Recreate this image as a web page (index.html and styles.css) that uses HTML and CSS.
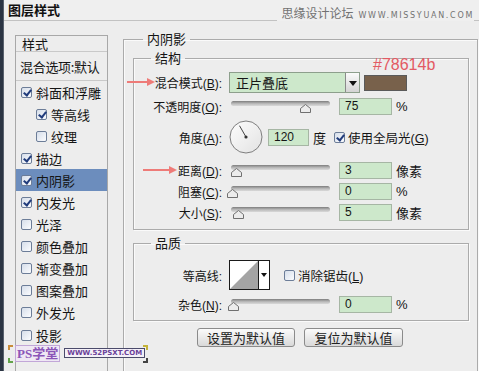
FILE: index.html
```html
<!DOCTYPE html>
<html lang="zh-CN">
<head>
  <meta charset="UTF-8" />
  <title>图层样式</title>
  <link rel="stylesheet" href="styles.css">
</head>
<body>
  <div class="strip"></div>

  <div class="dialog">
    <!-- title -->
    <header class="titlebar">
      <h1>图层样式</h1>
      <div class="site-mark"><span class="cn">思缘设计论坛</span><span class="url">WWW.MISSYUAN.COM</span></div>
    </header>

    <div class="dialog-body">
      <!-- left list -->
      <aside class="styles-list">
        <div class="list-head">样式</div>
        <div class="list-blend">混合选项:默认</div>
        <div class="item"><span class="cb on"></span>斜面和浮雕</div>
        <div class="item sub"><span class="cb on"></span>等高线</div>
        <div class="item sub"><span class="cb"></span>纹理</div>
        <div class="item"><span class="cb on"></span>描边</div>
        <div class="item active"><span class="cb on"></span>内阴影</div>
        <div class="item"><span class="cb on"></span>内发光</div>
        <div class="item"><span class="cb"></span>光泽</div>
        <div class="item"><span class="cb"></span>颜色叠加</div>
        <div class="item"><span class="cb"></span>渐变叠加</div>
        <div class="item"><span class="cb"></span>图案叠加</div>
        <div class="item"><span class="cb"></span>外发光</div>
        <div class="item"><span class="cb"></span>投影</div>
      </aside>

      <!-- right panel -->
      <fieldset class="group outer">
        <legend>内阴影</legend>

        <fieldset class="group struct">
          <legend>结构</legend>

          <div class="row r-mode">
            <svg class="arrow a1" width="28" height="8" viewBox="0 0 28 8"><line x1="0" y1="4" x2="21" y2="4" stroke="#ee7b78" stroke-width="2"/><polygon points="20,0 28,4 20,8" fill="#ee7b78"/></svg>
            <span class="lbl">混合模式(<u>B</u>):</span>
            <div class="select"><span>正片叠底</span><i class="drop"></i></div>
            <div class="swatch"><span class="hex">#78614b</span></div>
          </div>

          <div class="row r-opacity">
            <span class="lbl">不透明度(<u>O</u>):</span>
            <div class="slider"><div class="track"></div><svg class="thumb" style="left:69px" width="11" height="9" viewBox="0 0 11 9"><polygon points="0.5,8.5 0.5,4.5 5.5,0.5 10.5,4.5 10.5,8.5" fill="#ececec" stroke="#707070"/></svg></div>
            <div class="field">75</div>
            <span class="unit">%</span>
          </div>

          <div class="row r-angle">
            <span class="lbl">角度(<u>A</u>):</span>
            <svg class="dial" width="34" height="34" viewBox="0 0 34 34">
              <defs><linearGradient id="dg" x1="0" y1="0" x2="1" y2="1"><stop offset="0" stop-color="#fdfdfd"/><stop offset="1" stop-color="#e2e2e2"/></linearGradient></defs>
              <circle cx="17" cy="17" r="16" fill="url(#dg)" stroke="#7e7e7e"/>
              <line x1="17" y1="17" x2="10.5" y2="5.7" stroke="#444" stroke-width="1"/>
              <circle cx="17" cy="17" r="1.6" fill="#333"/>
            </svg>
            <div class="field narrow">120</div>
            <span class="unit">度</span>
            <span class="cb on global"></span><span class="cb-text">使用全局光(<u>G</u>)</span>
          </div>

          <div class="row r-dist">
            <svg class="arrow a2" width="34" height="8" viewBox="0 0 34 8"><line x1="0" y1="4" x2="27" y2="4" stroke="#ee7b78" stroke-width="2"/><polygon points="26,0 34,4 26,8" fill="#ee7b78"/></svg>
            <span class="lbl">距离(<u>D</u>):</span>
            <div class="slider"><div class="track"></div><svg class="thumb" style="left:0px" width="11" height="9" viewBox="0 0 11 9"><polygon points="0.5,8.5 0.5,4.5 5.5,0.5 10.5,4.5 10.5,8.5" fill="#ececec" stroke="#707070"/></svg></div>
            <div class="field">3</div>
            <span class="unit">像素</span>
          </div>

          <div class="row r-choke">
            <span class="lbl">阻塞(<u>C</u>):</span>
            <div class="slider"><div class="track"></div><svg class="thumb" style="left:-4px" width="11" height="9" viewBox="0 0 11 9"><polygon points="0.5,8.5 0.5,4.5 5.5,0.5 10.5,4.5 10.5,8.5" fill="#ececec" stroke="#707070"/></svg></div>
            <div class="field">0</div>
            <span class="unit">%</span>
          </div>

          <div class="row r-size">
            <span class="lbl">大小(<u>S</u>):</span>
            <div class="slider"><div class="track"></div><svg class="thumb" style="left:2px" width="11" height="9" viewBox="0 0 11 9"><polygon points="0.5,8.5 0.5,4.5 5.5,0.5 10.5,4.5 10.5,8.5" fill="#ececec" stroke="#707070"/></svg></div>
            <div class="field">5</div>
            <span class="unit">像素</span>
          </div>
        </fieldset>

        <fieldset class="group quality">
          <legend>品质</legend>

          <div class="row r-contour">
            <span class="lbl">等高线:</span>
            <div class="contour">
              <svg width="28" height="28" viewBox="0 0 28 28"><rect width="28" height="28" fill="#fff"/><polygon points="0,28 28,0 28,28" fill="#a4a4a4"/></svg>
              <i class="drop"></i>
            </div>
            <span class="cb aa"></span><span class="cb-text">消除锯齿(<u>L</u>)</span>
          </div>

          <div class="row r-noise">
            <span class="lbl">杂色(<u>N</u>):</span>
            <div class="slider"><div class="track"></div><svg class="thumb" style="left:-3px" width="11" height="9" viewBox="0 0 11 9"><polygon points="0.5,8.5 0.5,4.5 5.5,0.5 10.5,4.5 10.5,8.5" fill="#ececec" stroke="#707070"/></svg></div>
            <div class="field">0</div>
            <span class="unit">%</span>
          </div>
        </fieldset>

        <div class="buttons">
          <button>设置为默认值</button>
          <button>复位为默认值</button>
        </div>
      </fieldset>
    </div>

    <!-- watermark -->
    <div class="ps-mark">
      <i class="corner tl"></i><i class="corner bl"></i><i class="corner tr"></i><i class="corner br"></i>
      <span class="ps">PS学堂</span><span class="ps-url">WWW.52PSXT.COM</span>
    </div>
  </div>
</body>
</html>
```

FILE: styles.css
```css
* { box-sizing: border-box; }
body {
  margin: 0;
  width: 479px;
  height: 371px;
  overflow: hidden;
  display: flex;
  background: #ededed;
  font-family: "Noto Sans CJK SC", sans-serif;
  font-size: 13px;
  color: #151515;
}
.strip {
  width: 4px;
  flex-shrink: 0;
  background: #2b3443;
  border-right: 1px solid #59616d;
}
.dialog {
  flex: 1;
  position: relative;
  height: 371px;
  overflow: hidden;
}

/* title */
.titlebar {
  height: 21px;
  border-bottom: 1px solid #c2c2c2;
  display: flex;
  align-items: center;
  padding-left: 4px;
  background: #efefef;
}
.titlebar h1 {
  margin: 0;
  font-size: 13px;
  font-weight: bold;
  line-height: 20px;
  color: #111;
}
.site-mark {
  position: absolute;
  right: 5px;
  top: 5px;
  display: flex;
  align-items: flex-end;
  background: #efefef;
  padding-left: 4px;
  color: #727272;
}
.site-mark .cn { font-size: 12px; line-height: 16px; }
.site-mark .url {
  font-family: "DejaVu Sans", sans-serif;
  font-size: 8px;
  letter-spacing: 1.7px;
  margin-left: 5px;
  line-height: 11px;
}

.dialog-body {
  display: flex;
  padding-top: 10px;
}

/* left list */
.styles-list {
  margin-top: 4px;
  margin-left: 11px;
  width: 93px;
  height: 336px;
  border: 1px solid #a8a8a8;
  border-bottom: 0;
  flex-shrink: 0;
}
.list-head {
  height: 16px;
  line-height: 15px;
  padding-left: 6px;
  border-bottom: 1px solid #c9c9c9;
}
.list-blend {
  height: 29px;
  line-height: 29px;
  padding-left: 4px;
  border-bottom: 1px solid #c9c9c9;
  white-space: nowrap;
  letter-spacing: -0.3px;
}
.item {
  height: 22.1px;
  display: flex;
  align-items: center;
  padding-left: 5px;
}
.item.sub { padding-left: 20px; }
.item.active { background: #6c8dbd; }
.item .cb { margin-right: 4px; }

/* checkbox */
.cb {
  position: relative;
  display: inline-block;
  width: 11px;
  height: 11px;
  border: 1px solid #6c7d98;
  border-radius: 2px;
  background: linear-gradient(135deg, #d6deea, #fbfcfe);
  flex-shrink: 0;
}
.cb.on::after {
  content: "";
  position: absolute;
  left: 3px;
  top: 0px;
  width: 3px;
  height: 6px;
  border: solid #213c7c;
  border-width: 0 2px 2px 0;
  transform: rotate(38deg);
}
.cb-text {
  margin-left: 3px;
  white-space: nowrap;
  font-family: "Liberation Sans", "Noto Sans CJK SC", sans-serif;
  font-size: 12.5px;
}

/* group boxes */
.group {
  margin: 0;
  border: 1px solid #ababab;
  box-shadow: inset 1px 1px 0 #fafafa, 1px 1px 0 #fafafa;
  min-width: 0;
}
.group legend {
  padding: 0 4px;
  line-height: 16px;
  font-size: 13px;
}
.outer {
  margin-left: 15px;
  width: 355px;
  height: 340px;
  padding: 3px 8px 0 9px;
  border-bottom: 0;
}
.outer > legend { margin-left: 10px; }
.struct {
  padding: 6px 0 8px 0;
}
.struct > legend,
.quality > legend { margin-left: 17px; }
.quality {
  margin-top: 5px;
  padding: 9px 0 7px 0;
}

/* rows */
.row {
  position: relative;
  display: flex;
  align-items: center;
  height: 17px;
  white-space: nowrap;
}
.lbl {
  width: 88px;
  text-align: right;
  font-family: "Liberation Sans", "Noto Sans CJK SC", sans-serif;
  font-size: 12px;
}
.lbl u, .cb-text u { text-decoration: underline; text-underline-offset: 1px; }
.r-mode { height: 21px; }
.r-opacity { margin-top: 5px; }
.r-angle { margin-top: 5px; height: 34px; }
.r-dist { margin-top: 8px; }
.r-choke { margin-top: 4px; }
.r-size { margin-top: 4px; }
.r-contour { height: 30px; }
.r-noise { margin-top: 6px; }

.select {
  margin-left: 7px;
  width: 131px;
  height: 21px;
  border: 1px solid #8d9f8c;
  background: #cde8cb;
  display: flex;
  align-items: center;
  padding-left: 6px;
  font-size: 13px;
}
.select span { flex: 1; }
.drop {
  position: relative;
  width: 14px;
  height: 100%;
  border-left: 1px solid #8a8a8a;
  background: linear-gradient(#fafafa, #d4d4d4);
}
.drop::after {
  content: "";
  position: absolute;
  left: 50%;
  top: 50%;
  margin: -2px 0 0 -4px;
  border: 4px solid transparent;
  border-top: 5px solid #111;
  border-bottom: 0;
}
.swatch {
  position: relative;
  margin-left: 4px;
  width: 43px;
  height: 16px;
  background: #78614b;
  border: 1px solid #5a5a5a;
}
.hex {
  position: absolute;
  left: 8px;
  bottom: 17px;
  font-family: "Liberation Sans", sans-serif;
  font-size: 16px;
  line-height: 16px;
  color: #e35a63;
}

.slider {
  position: relative;
  margin-left: 9px;
  width: 99px;
  height: 17px;
}
.track {
  position: absolute;
  left: 0;
  right: 0;
  top: 3px;
  height: 5px;
  border-radius: 3px;
  background: linear-gradient(#7d7d7d, #bcbcbc 55%, #d9d9d9);
}
.thumb {
  position: absolute;
  top: 6px;
}
.field {
  margin-left: 9px;
  width: 53px;
  height: 17px;
  border: 1px solid #a6b6a4;
  background: #cde8cb;
  padding-left: 5px;
  font-family: "Liberation Sans", sans-serif;
  font-size: 12px;
  line-height: 15px;
}
.field.narrow { margin-left: 5px; width: 41px; }
.unit {
  margin-left: 4px;
  font-family: "Liberation Sans", "Noto Sans CJK SC", sans-serif;
  font-size: 13px;
}
.dial { margin-left: 7px; }
.global { margin-left: 8px; }

.contour {
  margin-left: 7px;
  width: 41px;
  height: 30px;
  border: 1px solid #1a1a1a;
  display: flex;
}
.contour svg { display: block; }
.contour .drop {
  width: 11px;
  background: #fff;
  border-left: 1px solid #1a1a1a;
}
.contour .drop::after {
  margin: -2px 0 0 -3px;
  border-width: 3px;
  border-top-width: 4px;
}
.aa { margin-left: 14px; }

.buttons {
  display: flex;
  gap: 9px;
  margin-top: 7px;
  padding-left: 64px;
}
.buttons button {
  height: 19px;
  width: 98px;
  padding: 0;
  border: 1px solid #8b8b8b;
  border-radius: 3px;
  background: linear-gradient(#fbfbfb, #d9d9d9);
  font-family: "Noto Sans CJK SC", sans-serif;
  font-size: 13px;
  line-height: 17px;
  color: #222;
}
.buttons button + button { width: 99px; }

.arrow { position: absolute; }
.a1 { left: -7px; top: 6px; }
.a2 { left: 9px; top: 4px; }

/* bottom-left watermark */
.ps-mark {
  position: absolute;
  left: 4px;
  top: 345px;
  width: 136px;
  height: 16px;
  display: flex;
  align-items: center;
  white-space: nowrap;
}
.ps {
  margin-left: 7px;
  font-family: "Liberation Serif", "Noto Sans CJK SC", serif;
  font-size: 13px;
  line-height: 15px;
  font-weight: bold;
  color: #8b55b8;
  background: #efe8f4;
  padding: 0 1px;
  border: 1px solid #c2a7d8;
}
.ps-url {
  margin-left: 4px;
  padding: 0 2px;
  font-family: "DejaVu Sans", sans-serif;
  font-size: 7px;
  line-height: 8px;
  font-weight: bold;
  color: #6a3f98;
  border: 1px solid #4b4b6b;
  background: #f4f0f8;
}
.corner {
  position: absolute;
  width: 5px;
  height: 5px;
  border: solid #c98c3a;
}
.corner.tl { left: 0; top: 0; border-width: 2px 0 0 2px; }
.corner.bl { left: 0; bottom: -2px; border-width: 0 0 2px 2px; border-color: #62a34a; }
.corner.tr { right: -4px; top: 0; border-width: 2px 2px 0 0; border-color: #c4b33a; }
.corner.br { right: -4px; bottom: -2px; border-width: 0 2px 2px 0; border-color: #444; }
```
